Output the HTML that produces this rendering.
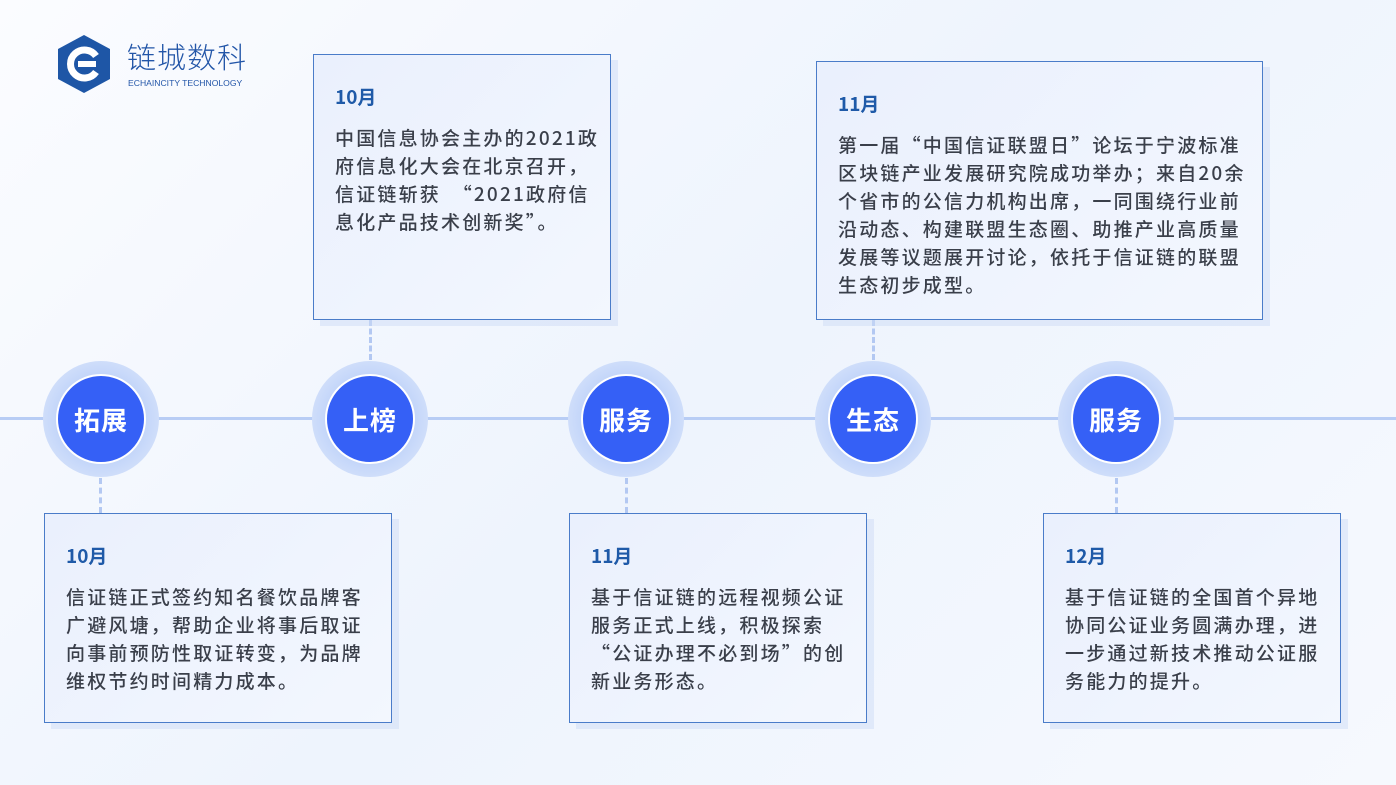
<!DOCTYPE html>
<html><head><meta charset="utf-8"><style>
*{margin:0;padding:0;box-sizing:border-box}
body{width:1396px;height:785px;overflow:hidden;position:relative;background:linear-gradient(135deg,#fbfcff 0%,#eef4fd 50%,#f6f9fe 100%);font-family:"Liberation Sans","Noto Sans CJK SC",sans-serif}
.line{position:absolute;left:0;width:1396px;top:417px;height:3px;background:#b8cdf5}
.dash{position:absolute;width:0;border-left:3px dashed #b3c8f2}
.ring{position:absolute;width:116px;height:116px;border-radius:50%;background:radial-gradient(circle,#c4d6f9 55%,#e3ecfd 100%);}
.dot{position:absolute;left:13px;top:13px;width:90px;height:90px;border-radius:50%;background:#3560f6;border:2px solid #fff;color:#fff;font-size:26px;font-weight:bold;display:flex;align-items:center;justify-content:center;letter-spacing:1px;font-family:"Noto Sans CJK SC",sans-serif}
.card{position:absolute;border:1.5px solid #4a7cc9;background:linear-gradient(135deg,#eaf0fd,#f3f7fe);box-shadow:7px 6px 0 rgba(205,220,246,0.5);padding:29px 0 0 21px}
.card h4{color:#1f5aa8;font-size:19px;font-weight:bold;margin-bottom:14px;font-family:"Noto Sans CJK SC",sans-serif;line-height:26px}
.card p{color:#3a3f4a;font-size:19px;line-height:28px;letter-spacing:2.2px;font-weight:500;white-space:nowrap;font-family:"Noto Sans CJK SC",sans-serif}
</style></head><body>
<svg style="position:absolute;left:56px;top:34px" width="56" height="60" viewBox="0 0 56 60"><polygon points="28,1 54,15 54,45 28,59 2,45 2,15" fill="#1e56a6"/><path d="M40 22 A14 14 0 1 0 40 38" stroke="#fff" stroke-width="7" fill="none"/><path d="M22 30 H40" stroke="#fff" stroke-width="6"/></svg>
<div style="position:absolute;left:127px;top:38px;color:#2356a8;font-size:29px;letter-spacing:1px;font-family:'Noto Sans CJK SC',sans-serif;font-weight:300;line-height:36px">链城数科</div>
<div style="position:absolute;left:128px;top:78px;color:#2356a8;font-size:8.6px;letter-spacing:0">ECHAINCITY TECHNOLOGY</div>
<div class="line"></div>
<div class="dash" style="left:99px;top:478px;height:35px"></div>
<div class="dash" style="left:369px;top:320px;height:40px"></div>
<div class="dash" style="left:625px;top:478px;height:35px"></div>
<div class="dash" style="left:872px;top:320px;height:40px"></div>
<div class="dash" style="left:1115px;top:478px;height:35px"></div>
<div class="ring" style="left:43px;top:361px"><div class="dot">拓展</div></div>
<div class="ring" style="left:312px;top:361px"><div class="dot">上榜</div></div>
<div class="ring" style="left:568px;top:361px"><div class="dot">服务</div></div>
<div class="ring" style="left:815px;top:361px"><div class="dot">生态</div></div>
<div class="ring" style="left:1058px;top:361px"><div class="dot">服务</div></div>
<div class="card" style="left:44px;top:513px;width:348px;height:210px"><h4>10月</h4><p>信证链正式签约知名餐饮品牌客<br>广避风塘，帮助企业将事后取证<br>向事前预防性取证转变，为品牌<br>维权节约时间精力成本。</p></div>
<div class="card" style="left:313px;top:54px;width:298px;height:266px"><h4>10月</h4><p>中国信息协会主办的2021政<br>府信息化大会在北京召开，<br>信证链斩获　“2021政府信<br>息化产品技术创新奖”。</p></div>
<div class="card" style="left:569px;top:513px;width:298px;height:210px"><h4>11月</h4><p>基于信证链的远程视频公证<br>服务正式上线，积极探索<br>“公证办理不必到场”的创<br>新业务形态。</p></div>
<div class="card" style="left:816px;top:61px;width:447px;height:259px"><h4>11月</h4><p>第一届“中国信证联盟日”论坛于宁波标准<br>区块链产业发展研究院成功举办；来自20余<br>个省市的公信力机构出席，一同围绕行业前<br>沿动态、构建联盟生态圈、助推产业高质量<br>发展等议题展开讨论，依托于信证链的联盟<br>生态初步成型。</p></div>
<div class="card" style="left:1043px;top:513px;width:298px;height:210px"><h4>12月</h4><p>基于信证链的全国首个异地<br>协同公证业务圆满办理，进<br>一步通过新技术推动公证服<br>务能力的提升。</p></div>
</body></html>
